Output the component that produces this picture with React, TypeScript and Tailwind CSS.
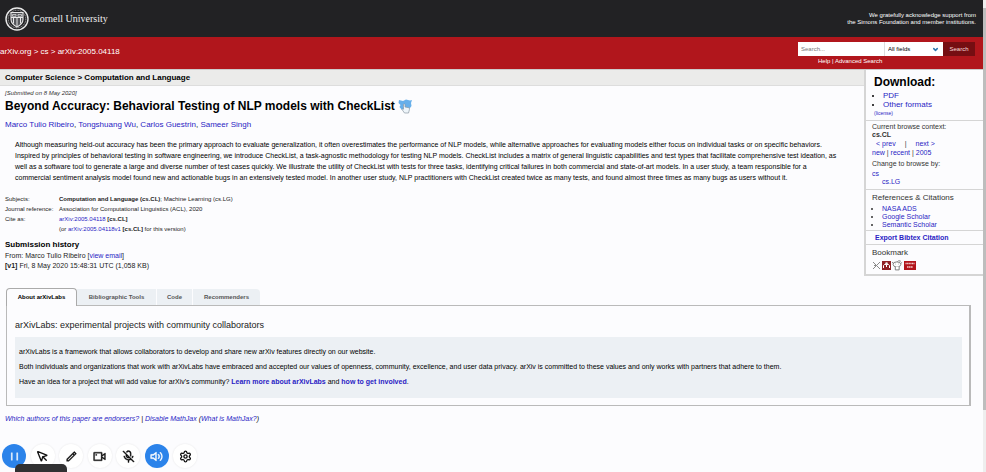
import React from "react";
import { ChevronDown, MousePointer, Settings } from "lucide-react";
import {
  RiPauseLine,
  RiPencilLine,
  RiVidiconLine,
  RiMicOffLine,
  RiVolumeUpLine,
} from "react-icons/ri";

function Link({ children, className = "" }: { children: React.ReactNode; className?: string }) {
  return (
    <a href="#" className={`text-[#2a1cc4] ${className}`}>
      {children}
    </a>
  );
}

function CornellSeal() {
  return (
    <svg viewBox="0 0 24 24" className="size-6" fill="none" stroke="#e8e8e8" aria-hidden="true">
      <circle cx="12" cy="12" r="11" strokeWidth="1.4" />
      <circle cx="12" cy="12" r="8.8" strokeWidth="0.7" strokeDasharray="1 0.7" />
      <path d="M6 5.5h12v7c0 3.600-3 6-6 7.500-3-1.500-6-3.900-6-7.500z" strokeWidth="1.100" fill="#55565a" />
      <path d="M6 10.500h12M12 10.500v9M8.500 11v5.500M15.500 11v5.500" strokeWidth="1" />
      <path d="M7.500 7.500h3.500v1.800H7.500zM13 7.500h3.500v1.800H13z" strokeWidth="0.7" />
    </svg>
  );
}

function Header() {
  return (
    <header>
      <div className="flex h-[37px] items-center justify-between bg-[#222224] pr-[7px] pl-[5px] text-white">
        <a href="#" className="flex items-center gap-1">
          <CornellSeal />
          <span className="font-['Liberation_Serif',serif] text-[10px] text-[#eeeeee]">Cornell University</span>
        </a>
        <p className="text-right text-[6px] leading-[7px]">
          We gratefully acknowledge support from
          <br />
          the Simons Foundation and member institutions.
        </p>
      </div>
      <div className="flex h-8 justify-between bg-[#b1161c] pr-2 text-white">
        <nav className="flex items-center pb-[2px] text-[8px]">
          <span>
            <a href="#">arXiv.org</a> &gt; <a href="#">cs</a> &gt; arXiv:2005.04118
          </span>
        </nav>
        <form className="pt-[5px]" onSubmit={(e) => e.preventDefault()}>
          <div className="flex h-[14px] text-[6px]">
            <input
              aria-label="Search"
              placeholder="Search..."
              className="w-[87px] border-r border-[#dddddd] bg-white px-[3px] text-black outline-none placeholder:text-[#777777]"
            />
            <div className="relative w-[58px] bg-white text-black">
              <select aria-label="Search field" className="h-full w-full appearance-none bg-white pl-[3px] outline-none">
                <option>All fields</option>
              </select>
              <ChevronDown className="pointer-events-none absolute top-1 right-1 size-[7px] text-[#2a76ae]" strokeWidth={5} />
            </div>
            <button className="w-8 bg-[#750e12] text-[#f5dada]">Search</button>
          </div>
          <p className="pt-[2px] pl-5 text-[6px] leading-[7px]">
            <a href="#">Help</a> | <a href="#">Advanced Search</a>
          </p>
        </form>
      </div>
    </header>
  );
}

function Bibsonomy() {
  return (
    <svg viewBox="0 0 9 9" className="size-[9px]" fill="none" stroke="#8a8a8a" aria-hidden="true">
      <path d="M1 1l7 7M8 1L4.500 4.500 1 8M2 4.500h3" />
    </svg>
  );
}
function Mendeley() {
  return (
    <svg viewBox="0 0 9 9" className="size-[9px]" aria-hidden="true">
      <rect width="9" height="9" fill="#8f2024" />
      <path d="M1.500 7V4.500l1-1h4l1 1V7M4.500 4v2" fill="none" stroke="#fff" />
      <circle cx="4.500" cy="2.500" r="1.300" fill="#eee" />
    </svg>
  );
}
function RedditAlien() {
  return (
    <svg viewBox="0 0 10 10" className="size-[11px]" fill="#fff" stroke="#707070" strokeWidth="0.8" aria-hidden="true">
      <ellipse cx="4.500" cy="4" rx="3.500" ry="2.300" />
      <path d="M3 6v3h3.500V6M5 1.700L6 .6l2 .5M.8 3L.5 1.800M8 3l1.200-.7" />
      <path d="M3.300 3.700h.3M5.500 3.700h.3" stroke="#333" />
    </svg>
  );
}
function ScienceWise() {
  return (
    <svg viewBox="0 0 12 9" className="h-[9px] w-3" stroke="#f1c9c9" aria-hidden="true">
      <rect width="12" height="9" fill="#b2141b" stroke="none" />
      <path d="M1.500 2.500h9" strokeDasharray="1.200 .4" strokeWidth="1.400" />
      <path d="M3 6h6" strokeDasharray="1.400 .4" strokeWidth="1.600" />
    </svg>
  );
}

function Sidebar() {
  return (
    <aside className="w-[119px] shrink-0 border-b-2 border-l-2 border-[#d5d5d5] text-[7px] text-[#333333]">
      <section className="border-b border-[#d5d5d5] px-2 pt-[5px] pb-[2px]">
        <h2 className="text-[12px] leading-[15px] font-bold text-black">Download:</h2>
        <ul className="list-disc pt-px pl-[9px] text-[8px] leading-[9px] text-black">
          <li>
            <Link>PDF</Link>
          </li>
          <li>
            <Link>Other formats</Link>
          </li>
        </ul>
        <p className="text-[5px] leading-[9px]">
          <Link>(license)</Link>
        </p>
      </section>
      <section className="border-b border-[#d5d5d5] px-[6px] pt-[2px] pb-[3px]">
        <p className="leading-[8px]">Current browse context:</p>
        <p className="leading-[8px] font-bold">cs.CL</p>
        <p className="flex gap-[9px] pt-px pl-1 leading-[8px]">
          <Link>&lt; prev</Link>
          <span>|</span>
          <Link>next &gt;</Link>
        </p>
        <p className="leading-[10px]">
          <Link>new</Link> | <Link>recent</Link> | <Link>2005</Link>
        </p>
        <p className="leading-[12px]">Change to browse by:</p>
        <p className="leading-[7px]">
          <Link>cs</Link>
        </p>
        <p className="pl-[10px] leading-[9px]">
          <Link>cs.LG</Link>
        </p>
      </section>
      <section className="border-b border-[#d5d5d5] px-[6px] pt-[2px] pb-px">
        <h3 className="text-[8px] leading-[12px]">References &amp; Citations</h3>
        <ul className="list-disc pt-px pl-[10px] leading-[8px]">
          <li>
            <Link>NASA ADS</Link>
          </li>
          <li>
            <Link>Google Scholar</Link>
          </li>
          <li>
            <Link>Semantic Scholar</Link>
          </li>
        </ul>
      </section>
      <p className="border-b border-[#d5d5d5] pl-[9px] leading-[13px] font-bold">
        <Link>Export Bibtex Citation</Link>
      </p>
      <section className="px-[6px] pb-[3px]">
        <h3 className="text-[8px] leading-[15px]">Bookmark</h3>
        <div className="flex items-center gap-px">
          <Bibsonomy />
          <Mendeley />
          <RedditAlien />
          <ScienceWise />
        </div>
      </section>
    </aside>
  );
}

function TwitterBird() {
  return (
    <svg viewBox="0 0 15 17" className="h-[17px] w-[15px]" aria-hidden="true">
      <path d="M1 2l4 1 3-1.500 4 1 2-.5-1 3 .5 3-3 4H4L1.500 9 2.500 7 .5 5z" fill="#67afea" />
      <path d="M5.500 8.500V6.300q.8-.8 1.500 0V9l4 .8q.8.500.4 2L10.500 15H6.500L4 11.500q0-1 1.500-.3z" fill="#eef5fa" stroke="#8b98a3" strokeWidth="0.7" />
    </svg>
  );
}

const abstractText =
  "Although measuring held-out accuracy has been the primary approach to evaluate generalization, it often overestimates the performance of NLP models, while alternative approaches for evaluating models either focus on individual tasks or on specific behaviors. Inspired by principles of behavioral testing in software engineering, we introduce CheckList, a task-agnostic methodology for testing NLP models. CheckList includes a matrix of general linguistic capabilities and test types that facilitate comprehensive test ideation, as well as a software tool to generate a large and diverse number of test cases quickly. We illustrate the utility of CheckList with tests for three tasks, identifying critical failures in both commercial and state-of-art models. In a user study, a team responsible for a commercial sentiment analysis model found new and actionable bugs in an extensively tested model. In another user study, NLP practitioners with CheckList created twice as many tests, and found almost three times as many bugs as users without it.";

function Paper() {
  return (
    <main className="min-w-0 flex-1">
      <div className="h-4 border-b border-[#dddddd] bg-[#ebebea] pl-[5px] text-[8px] leading-[15px] font-bold">
        Computer Science &gt; Computation and Language
      </div>
      <div className="px-[5px]">
        <p className="pt-[3px] text-[6px] leading-[8px] text-[#333333] italic">[Submitted on 8 May 2020]</p>
        <h1 className="flex h-[18px] items-center gap-[3px] text-[12px] font-bold">
          Beyond Accuracy: Behavioral Testing of NLP models with CheckList
          <TwitterBird />
        </h1>
        <p className="pt-1 text-[8px] leading-[12px]">
          <Link>Marco Tulio Ribeiro</Link>, <Link>Tongshuang Wu</Link>, <Link>Carlos Guestrin</Link>,{" "}
          <Link>Sameer Singh</Link>
        </p>
        <p className="px-[10px] pt-2 pr-5 text-[7px] leading-[11px]">{abstractText}</p>
        <table className="mt-[11px] text-left text-[6px] leading-[10px] text-[#222222]">
          <tbody>
            <tr>
              <th className="w-[54px] font-normal">Subjects:</th>
              <td>
                <b>Computation and Language (cs.CL)</b>; Machine Learning (cs.LG)
              </td>
            </tr>
            <tr>
              <th className="font-normal">Journal reference:</th>
              <td>Association for Computational Linguistics (ACL), 2020</td>
            </tr>
            <tr>
              <th className="font-normal">Cite as:</th>
              <td>
                <Link>arXiv:2005.04118</Link> <b>[cs.CL]</b>
              </td>
            </tr>
            <tr>
              <td />
              <td>
                (or <Link>arXiv:2005.04118v1</Link> <b>[cs.CL]</b> for this version)
              </td>
            </tr>
          </tbody>
        </table>
        <h2 className="pt-[5px] text-[8px] leading-[11px] font-bold">Submission history</h2>
        <p className="pt-px text-[7px] leading-[10px] text-[#222222]">
          From: Marco Tulio Ribeiro [<Link>view email</Link>]
          <br />
          <b>[v1]</b> Fri, 8 May 2020 15:48:31 UTC (1,058 KB)
        </p>
      </div>
    </main>
  );
}

function Labs() {
  return (
    <section className="mt-[11px] mr-3 ml-[6px]">
      <div role="tablist" className="flex h-[18px] items-end text-[6px] font-bold text-[#555555]">
        <button role="tab" aria-selected="true" className="relative z-10 -mb-px h-[18px] w-[71px] rounded-t-[4px] border border-b-0 border-[#aaaaaa] bg-[#fcfcfe] text-black">
          About arXivLabs
        </button>
        <button role="tab" aria-selected="false" className="h-4 w-[80px] border-r border-[#fcfcfe] bg-[#ecf0f4]">Bibliographic Tools</button>
        <button role="tab" aria-selected="false" className="h-4 w-9 border-r border-[#fcfcfe] bg-[#ecf0f4]">Code</button>
        <button role="tab" aria-selected="false" className="h-4 w-[67px] rounded-tr-[4px] bg-[#ecf0f4]">Recommenders</button>
      </div>
      <div role="tabpanel" className="border border-r-2 border-[#bababa] p-2 pt-[13px] pr-[7px] pb-[7px]">
        <h2 className="text-[9px] leading-[13px] text-[#222222]">arXivLabs: experimental projects with community collaborators</h2>
        <div className="mt-[5px] flex flex-col gap-[5px] bg-[#ecf0f4] px-1 pt-[10px] pb-[11px] text-[7px] leading-[10px]">
          <p>arXivLabs is a framework that allows collaborators to develop and share new arXiv features directly on our website.</p>
          <p>
            Both individuals and organizations that work with arXivLabs have embraced and accepted our values of openness,
            community, excellence, and user data privacy. arXiv is committed to these values and only works with partners
            that adhere to them.
          </p>
          <p>
            Have an idea for a project that will add value for arXiv's community?{" "}
            <Link className="font-bold">Learn more about arXivLabs</Link> and{" "}
            <Link className="font-bold">how to get involved</Link>.
          </p>
        </div>
      </div>
    </section>
  );
}

const tools = [
  { label: "Pause", Icon: RiPauseLine, active: true },
  { label: "Cursor", Icon: MousePointer, active: false },
  { label: "Draw", Icon: RiPencilLine, active: false },
  { label: "Camera", Icon: RiVidiconLine, active: false },
  { label: "Microphone", Icon: RiMicOffLine, active: false },
  { label: "Sound", Icon: RiVolumeUpLine, active: true },
  { label: "Settings", Icon: Settings, active: false },
];

function RecorderBar() {
  return (
    <div className="fixed bottom-0 left-0">
      <div className="flex w-[197px] justify-between pb-1 pl-[2px]">
        {tools.map(({ label, Icon, active }) => (
          <button
            key={label}
            aria-label={label}
            className={`flex size-6 items-center justify-center rounded-full ${
              active ? "bg-[#2b83ea] text-white" : "bg-white text-[#111111] shadow-[0_0_2px_#e4e4e4]"
            }`}
          >
            <Icon className="size-[13px] stroke-[2.5px] [&[stroke-width='0']]:stroke-[0.6px]" />
          </button>
        ))}
      </div>
      <div className="absolute bottom-0 left-[15px] h-2 w-[52px] rounded-t-[5px] bg-[#303032]" />
    </div>
  );
}

export default function App() {
  return (
    <div className="flex min-h-screen bg-[#fcfcfe] font-['Liberation_Sans',Arial,sans-serif] text-black">
      <div className="min-w-0 flex-1">
        <Header />
        <div className="flex items-start border-t border-[#cccccc]">
          <Paper />
          <Sidebar />
        </div>
        <Labs />
        <p className="pt-2 pl-[5px] text-[7px] leading-[10px] italic">
          <Link>Which authors of this paper are endorsers?</Link> | <Link>Disable MathJax</Link> (
          <Link>What is MathJax?</Link>)
        </p>
      </div>
      <div className="w-[3px] bg-[#eeeeee]">
        <div className="mt-2 h-[402px] bg-[#bdbdbd]" />
      </div>
      <RecorderBar />
    </div>
  );
}
